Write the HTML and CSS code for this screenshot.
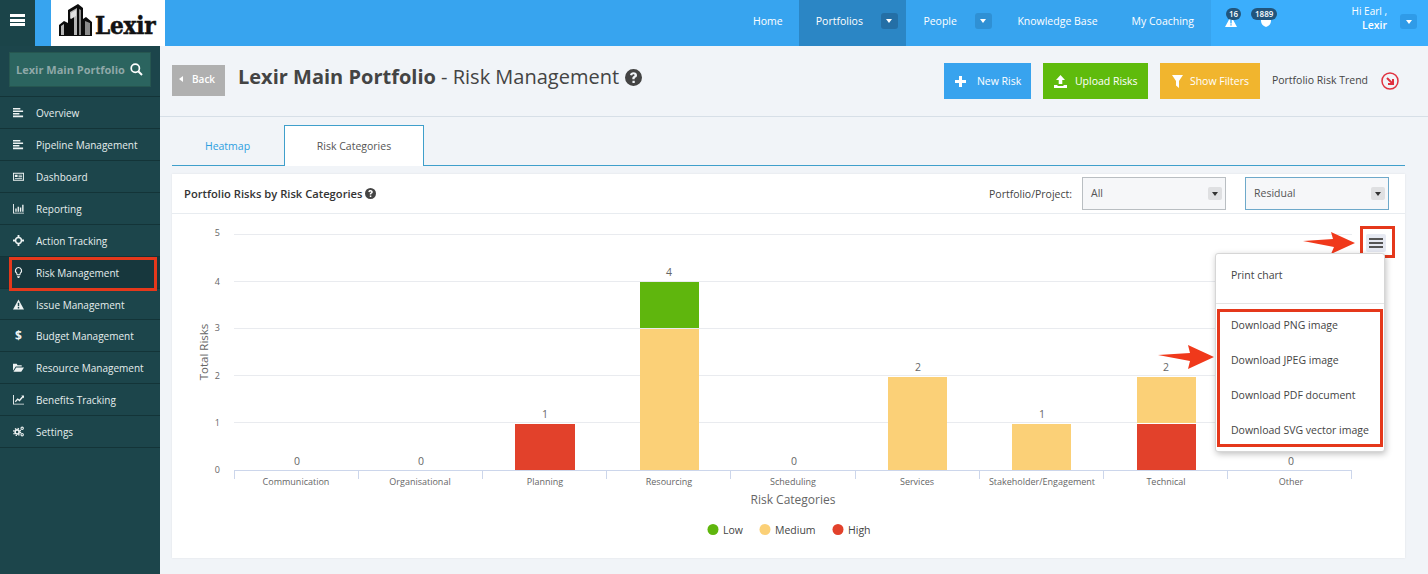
FILE: index.html
```html
<!DOCTYPE html>
<html lang="en">
<head>
<meta charset="utf-8">
<title>Lexir Main Portfolio - Risk Management</title>
<link rel="stylesheet" href="styles.css">
</head>
<body>
<header class="topbar">
  <button class="toggle" aria-label="Menu"><span></span><span></span><span></span></button>
  <div class="gap"></div>
  <div class="logo">
    <svg class="logo-mark" width="33" height="32" viewBox="0 0 33 32">
      <path fill="#0c0c0c" d="M0 32V21l5-4 4 2V6L19 0l5 4v11l3-2 6 5v14z"/>
      <path fill="#b5b5b5" d="M2 22l3-2v11H2zM11 8l7-4v27h-3V12l-4 3z"/>
      <path fill="#e2e2e2" d="M12 9l5-3v6l-5 3z"/>
      <path fill="#8a8a8a" d="M20 5l2 1v25h-2zM26 17l5 2v12h-5z"/>
    </svg>
    <span class="logo-text">Lexir</span>
  </div>
  <nav class="nav">
    <a class="nav-item">Home</a>
    <a class="nav-item active has-caret">Portfolios<span class="caret-btn dark"><i></i></span></a>
    <a class="nav-item has-caret">People<span class="caret-btn"><i></i></span></a>
    <a class="nav-item">Knowledge Base</a>
    <a class="nav-item">My Coaching</a>
  </nav>
  <div class="user-area">
    <span class="alert-icon">
      <svg width="12" height="11" viewBox="0 0 12 11"><path fill="#fff" fill-rule="evenodd" d="M6 0l6 11H0zM5.300 4v3.500h1.400V4zm0 4.300v1.300h1.400V8.300z"/></svg>
      <b class="badge">16</b>
    </span>
    <span class="alert-icon second">
      <svg width="10" height="11" viewBox="0 0 10 11"><path fill="#fff" d="M5 0l5 2v3c0 3-2 5-5 6-3-1-5-3-5-6V2z"/></svg>
      <b class="badge">1889</b>
    </span>
    <div class="user-name"><span>Hi Earl ,</span><strong>Lexir</strong></div>
    <span class="caret-btn user-caret"><i></i></span>
  </div>
</header>

<div class="layout">
  <aside class="sidebar">
    <div class="search-wrap">
      <div class="search">
        <span>Lexir Main Portfolio</span>
        <svg width="13" height="13" viewBox="0 0 13 13"><circle cx="5.300" cy="5.300" r="4.100" fill="none" stroke="#fff" stroke-width="1.700"/><path d="M8.500 8.500L12 12" stroke="#fff" stroke-width="2"/></svg>
      </div>
    </div>
    <ul class="menu">
      <li><svg class="mi" viewBox="0 0 12 12"><path d="M0 1h8v1.700H0zM0 3.800h11v1.700H0zM0 6.600h7v1.700H0zM0 9.400h11v1.700H0z"/></svg>Overview</li>
      <li><svg class="mi" viewBox="0 0 12 12"><path d="M0 1h8v1.700H0zM0 3.800h11v1.700H0zM0 6.600h7v1.700H0zM0 9.400h11v1.700H0z"/></svg>Pipeline Management</li>
      <li><svg class="mi" viewBox="0 0 12 12"><path fill-rule="evenodd" d="M0 2h12v8.500H0zM1 3v6.500h10V3zM2 4h3v2.500H2zM6 4h4v1H6zM6 5.800h4v1H6zM2 7.500h8v1H2z"/></svg>Dashboard</li>
      <li><svg class="mi" viewBox="0 0 12 12"><path d="M0 1h1v9.500h11v1H0zM2.500 6h1.500v3.500H2.500zM5 4h1.500v5.500H5zM7.500 5h1.500v4.500H7.500zM10 2h1.500v7.500H10z"/></svg>Reporting</li>
      <li><svg class="mi" viewBox="0 0 12 12"><circle cx="6" cy="6" r="3.200" fill="none" stroke="#eef3f3" stroke-width="1.600"/><path d="M5 0h2v3H5zM5 9h2v3H5zM0 5h3v2H0zM9 5h3v2H9z"/></svg>Action Tracking</li>
      <li class="current"><svg class="mi" viewBox="0 0 12 12"><path fill-rule="evenodd" d="M6 0a4 4 0 0 1 2.400 7.200L8 9H4l-.4-1.800A4 4 0 0 1 6 0zm0 1.200a2.800 2.800 0 0 0-1.500 5.100l.4 1.500h2.200l.4-1.500A2.800 2.800 0 0 0 6 1.200zM4.500 10h3v1l-1 1h-1l-1-1z"/></svg>Risk Management</li>
      <li><svg class="mi" viewBox="0 0 12 12"><path fill-rule="evenodd" d="M6 .5l6 11H0zM5.200 4v4h1.600V4zm0 4.800v1.500h1.600V8.800z"/></svg>Issue Management</li>
      <li><span class="mi dollar">$</span>Budget Management</li>
      <li><svg class="mi" viewBox="0 0 12 12"><path d="M0 2h4l1 1.500h4.500V5H3L0 9.500zM3.500 6H12L9 10.500H.5z"/></svg>Resource Management</li>
      <li><svg class="mi" viewBox="0 0 12 12"><path d="M0 1h1v9.500h11v1H0zM2 8l3-3.500 2 1.500 3-3.500-1-.8h3v3l-1-.9-3.800 4.300-2-1.500L3 9z"/></svg>Benefits Tracking</li>
      <li><svg class="mi" viewBox="0 0 12 12"><g fill="none" stroke="#eef3f3"><circle cx="4.500" cy="6.500" r="2.200" stroke-width="1.800"/><circle cx="4.500" cy="6.500" r="3.800" stroke-width="1.400" stroke-dasharray="1.500 1.500"/><circle cx="10" cy="2.500" r="1.300" stroke-width="1.200"/><circle cx="10" cy="9.500" r="1.300" stroke-width="1.200"/></g></svg>Settings</li>
    </ul>
  </aside>

  <main class="main">
    <section class="page-head">
      <a class="back"><i></i>Back</a>
      <h1><b>Lexir Main Portfolio</b> - Risk Management
        <svg class="help big" viewBox="0 0 16 16"><use href="#help"/></svg>
      </h1>
      <div class="actions">
        <a class="btn blue"><svg width="11" height="11" viewBox="0 0 11 11"><path fill="#fff" d="M4 0h3v4h4v3H7v4H4V7H0V4h4z"/></svg>New Risk</a>
        <a class="btn green"><svg width="13" height="13" viewBox="0 0 13 13"><path fill="#fff" d="M6.500 0L11 5H8.300v4H4.700V5H2zM0 10h3.500v1h6v-1H13v3H0z"/></svg>Upload Risks</a>
        <a class="btn orange"><svg width="11" height="13" viewBox="0 0 11 13"><path fill="#fff" d="M0 0h11L7 6v7L4 10.500V6z"/></svg>Show Filters</a>
        <span class="trend-label">Portfolio Risk Trend</span>
        <svg class="trend" width="18" height="18" viewBox="0 0 18 18"><circle cx="9" cy="9" r="8" fill="none" stroke="#e0313f" stroke-width="1.500"/><path d="M6 6l5.500 5.500M12 7v5H7" fill="none" stroke="#e0313f" stroke-width="2"/></svg>
      </div>
    </section>

    <section class="content">
      <div class="tabs">
        <a class="tab">Heatmap</a>
        <a class="tab selected">Risk Categories</a>
      </div>

      <div class="panel">
        <div class="panel-head">
          <h2>Portfolio Risks by Risk Categories
            <svg class="help small" viewBox="0 0 16 16"><use href="#help"/></svg>
          </h2>
          <label class="filter-label">Portfolio/Project:</label>
          <div class="select"><span class="select-text">All</span><span class="select-caret"><i></i></span></div>
          <div class="select focus"><span class="select-text">Residual</span><span class="select-caret"><i></i></span></div>
        </div>

        <div class="chart">
          <svg class="chart-svg" width="1233" height="344" viewBox="172 214 1233 344">
            <g class="grid">
              <path d="M234 234.500H1352M234 281.500H1352M234 328.500H1352M234 375.500H1352M234 422.500H1352"/>
            </g>
            <g class="axis">
              <path d="M234 470.500H1352M234.500 470v9M358.500 470v9M482.500 470v9M606.500 470v9M730.500 470v9M855.500 470v9M979.500 470v9M1103.500 470v9M1227.500 470v9M1351.500 470v9"/>
            </g>
            <g class="ylab">
              <text x="220" y="236">5</text><text x="220" y="285">4</text><text x="220" y="331">3</text>
              <text x="220" y="379">2</text><text x="220" y="426">1</text><text x="220" y="473">0</text>
            </g>
            <text class="ytitle" transform="translate(208 352) rotate(-90)">Total Risks</text>
            <rect x="515" y="424" width="60" height="46" fill="#e2412b"/>
            <rect x="640" y="282" width="59" height="46" fill="#5fb60d"/>
            <rect x="640" y="329" width="59" height="141" fill="#fbd077"/>
            <rect x="888" y="377" width="59" height="93" fill="#fbd077"/>
            <rect x="1012" y="424" width="59" height="46" fill="#fbd077"/>
            <rect x="1137" y="377" width="59" height="46" fill="#fbd077"/>
            <rect x="1137" y="424" width="59" height="46" fill="#e2412b"/>
            <g class="val">
              <text x="297" y="465">0</text><text x="421" y="465">0</text><text x="545" y="418">1</text>
              <text x="669" y="276">4</text><text x="794" y="465">0</text><text x="918" y="371">2</text>
              <text x="1042" y="418">1</text><text x="1166" y="371">2</text><text x="1291" y="465">0</text>
            </g>
            <g class="cat">
              <text x="296" y="485">Communication</text><text x="420" y="485">Organisational</text>
              <text x="545" y="485">Planning</text><text x="669" y="485">Resourcing</text>
              <text x="793" y="485">Scheduling</text><text x="917" y="485">Services</text>
              <text x="1042" y="485">Stakeholder/Engagement</text><text x="1166" y="485">Technical</text>
              <text x="1291" y="485">Other</text>
            </g>
            <text class="xtitle" x="793" y="504">Risk Categories</text>
            <g class="legend">
              <circle cx="713" cy="529.500" r="5.500" fill="#5fb60d"/><text x="723" y="534">Low</text>
              <circle cx="765" cy="529.500" r="5.500" fill="#fbd077"/><text x="775" y="534">Medium</text>
              <circle cx="838" cy="529.500" r="5.500" fill="#e2412b"/><text x="848" y="534">High</text>
            </g>
          </svg>

          <div class="export-btn"><span></span><span></span><span></span></div>
          <div class="export-mark"></div>
          <svg class="arrow arrow-top" width="52" height="22" viewBox="0 0 52 22"><path fill="#f0391b" d="M0 9l30-2-2-7 24 11-24 11 3-7z"/></svg>

          <div class="export-menu">
            <div class="em-item first">Print chart</div>
            <hr>
            <div class="em-item">Download PNG image</div>
            <div class="em-item">Download JPEG image</div>
            <div class="em-item">Download PDF document</div>
            <div class="em-item">Download SVG vector image</div>
            <div class="downloads-mark"></div>
          </div>
          <svg class="arrow arrow-mid" width="56" height="24" viewBox="0 0 56 24"><path fill="#f0391b" d="M0 10l32-2-2-8 26 12-26 12 2-8z"/></svg>
        </div>
      </div>
    </section>
  </main>
</div>

<svg class="defs" width="0" height="0" aria-hidden="true">
  <symbol id="help" viewBox="0 0 16 16"><path fill="currentColor" fill-rule="evenodd" d="M8 0a8 8 0 1 1 0 16A8 8 0 0 1 8 0zM7 11v2.200h2.200V11zM8 3C6.200 3 5 4 4.700 5.600l2 .5C6.900 5.300 7.300 5 8 5c.6 0 1 .3 1 .8 0 .4-.3.7-1 1.100-.8.500-1.100 1.100-1.100 2v.7h2.200v-.5c0-.4.200-.6.800-1 .9-.6 1.400-1.300 1.400-2.300C11.300 4.100 10 3 8 3z"/></symbol>
</svg>
</body>
</html>
```
FILE: styles.css
```css
* { box-sizing: border-box; }
html, body { margin: 0; padding: 0; }
body {
  width: 1428px;
  height: 574px;
  overflow: hidden;
  background: #f1f4f8;
  font-family: "Open Sans", "Liberation Sans", sans-serif;
  font-size: 11px;
  color: #444;
}
.defs { position: absolute; }

/* Top bar */
.topbar { display: flex; height: 46px; background: #37a4ef; }
.toggle {
  width: 35px; height: 46px; border: 0; padding: 0 0 6px;
  background: #1b4449;
  display: flex; flex-direction: column; align-items: center; justify-content: center; gap: 1.500px;
}
.toggle span { display: block; width: 15px; height: 3px; background: #fff; }
.gap { width: 16px; }
.logo {
  width: 114px; background: #fff;
  display: flex; align-items: flex-end; padding: 0 0 10px 8px; gap: 3px;
}
.logo-text {
  font-family: "DejaVu Serif", serif;
  font-stretch: condensed;
  font-weight: 700; font-size: 24px; line-height: 20px; color: #111;
  letter-spacing: -.2px; -webkit-text-stroke: .5px #111;
}
.nav { display: flex; margin-left: auto; height: 46px; }
.nav-item {
  display: flex; align-items: center;
  padding: 0 17px 4px; color: #fff; font-size: 10.500px;
}
.nav-item:first-child { padding: 0 16px 4px; }
.nav-item.has-caret { padding-right: 8.500px; }
.nav-item.active { background: #2b86c5; }
.caret-btn {
  display: inline-flex; align-items: center; justify-content: center;
  width: 17px; height: 16px; border-radius: 3px; margin-left: 18px;
  background: #2f90d4;
}
.caret-btn.dark { background: #246fa6; }
.caret-btn i {
  width: 0; height: 0;
  border-left: 3px solid transparent; border-right: 3px solid transparent;
  border-top: 4px solid #fff;
}
.user-area {
  width: 217px; background: #3baefc; color: #fff;
  display: flex; padding-left: 14px;
}
.alert-icon { position: relative; width: 36px; padding-top: 16px; display: block; }
.alert-icon.second { width: 26px; }
.alert-icon svg { display: block; }
.badge {
  position: absolute; top: 8px; left: 1px;
  height: 12px; min-width: 14px; padding: 0 3px;
  border-radius: 6px; background: #21557c; color: #fff;
  font-size: 8px; line-height: 12px; font-weight: 600; text-align: center;
}
.second .badge { left: -10px; padding: 0 4px; }
.user-name {
  width: 100px; padding-top: 4px;
  display: flex; flex-direction: column; align-items: flex-end;
  font-size: 10px; line-height: 14px;
}
.user-name strong { font-weight: 600; font-size: 10.500px; }
.user-caret { height: 15px; width: 17px; margin: 14px 0 0 13px; background: #2f9be8; }

/* Layout */
.layout { display: flex; height: 528px; }
.sidebar { width: 160px; background: #1c454b; color: #e6eeee; flex: none; }
.search-wrap { height: 51px; padding: 6px 9px 0; border-bottom: 1px solid #133438; }
.search {
  width: 142px; height: 35px; background: #2b645f;
  border: 1px solid #265650;
  display: flex; align-items: center; justify-content: space-between;
  padding: 0 7px 0 6px; color: #8fa8a8;
  font-weight: 700; font-size: 11px; white-space: nowrap;
}
.menu { list-style: none; margin: 0; padding: 0; }
.menu li {
  height: 32px; display: flex; align-items: center;
  padding-left: 13px; border-bottom: 1px solid #133438;
  font-size: 10px; position: relative; white-space: nowrap;
}
.menu li:nth-child(7) { height: 31px; padding-top: 1px; }
.mi { width: 11px; height: 11px; margin-right: 12px; fill: #eef3f3; flex: none; }
.dollar { font-size: 12px; font-weight: 700; line-height: 11px; text-align: center; color: #eef3f3; }
.menu li.current { background: #17373d; }
.menu li.current::after {
  content: ""; box-sizing: border-box;
  position: absolute; left: 9px; top: 0; width: 148px; height: 34px;
  border: 3px solid #e5381b;
}

/* Main */
.main { width: 1268px; }
.page-head {
  height: 71px; border-bottom: 1px solid #d7dfe7;
  display: flex; padding: 17px 0 0 12px;
}
.back {
  width: 53px; height: 31px; margin-top: 2px; padding: 0 0 4px 7px;
  background: #b0b0b0; color: #fff;
  display: flex; align-items: center; font-size: 10px; font-weight: 600;
}
.back i {
  width: 0; height: 0; margin-right: 9px;
  border-top: 3px solid transparent; border-bottom: 3px solid transparent;
  border-right: 4px solid #fff;
}
h1 {
  margin: 0 0 0 13px; font-size: 20px; line-height: 27px; font-weight: 400; color: #444;
  white-space: nowrap;
}
h1 b { font-weight: 700; }
.help { display: inline-block; color: #444; }
.help.big { width: 17px; height: 17px; vertical-align: -2px; margin-left: 1px; }
.help.small { width: 11px; height: 11px; vertical-align: -1px; }
.actions { margin-left: auto; display: flex; align-items: flex-start; padding-right: 29px; }
.btn {
  display: flex; align-items: center; height: 36px; color: #fff; font-size: 10.500px;
  margin-right: 12px; white-space: nowrap;
}
.btn.blue { width: 87px; background: #38a3ee; padding-left: 11px; }
.btn.blue svg { margin-right: 11px; }
.btn.green { width: 105px; background: #5fbb0c; padding-left: 11px; }
.btn.green svg { margin-right: 8px; }
.btn.orange { width: 100px; background: #f1b52e; padding-left: 12px; }
.btn.orange svg { margin-right: 7px; }
.trend-label { font-size: 10.500px; line-height: 34px; margin-right: 13px; white-space: nowrap; }
.trend { margin-top: 9px; }

.content { padding: 8px 23px 0 12px; }
.tabs { height: 41px; display: flex; border-bottom: 1px solid #3f9fcb; }
.tab {
  height: 41px; display: flex; align-items: center; justify-content: center;
  width: 111px; margin-right: 1px; color: #2d9fe0; font-size: 10.500px;
}
.tab.selected {
  width: 140px; margin-right: 0; background: #fff; color: #555;
  border: 1px solid #3f9fcb; border-bottom: 0;
}
.panel {
  margin-top: 8px; width: 1233px; height: 384px; background: #fff;
  box-shadow: 0 0 2px rgba(0,0,0,.08);
}
.panel-head {
  height: 40px; border-bottom: 1px solid #e8ecf0;
  display: flex; align-items: center; padding: 0 16px 0 12px;
}
h2 { margin: 0 auto 0 0; font-size: 11.200px; font-weight: 600; color: #333; }
.filter-label { font-size: 10.500px; margin-right: 10px; color: #444; }
.select {
  width: 144px; height: 33px; border: 1px solid #b9bec2; background: #f6f7f9;
  display: flex; align-items: center; justify-content: space-between;
  padding: 0 3px 0 8px; font-size: 10.500px; color: #555;
}
.select-text { margin-bottom: 2px; }
.select.focus { margin-left: 19px; border-color: #6ea9ca; }
.select-caret {
  width: 14px; height: 13px; background: #dfe0e2; border-radius: 2px;
  display: flex; align-items: center; justify-content: center;
}
.select-caret i {
  width: 0; height: 0;
  border-left: 3px solid transparent; border-right: 3px solid transparent; border-top: 4px solid #333;
}

/* Chart */
.chart { position: relative; height: 344px; }
.chart-svg { display: block; font-family: "Open Sans", "Liberation Sans", sans-serif; }
.grid path { stroke: #e9ebef; fill: none; }
.axis path { stroke: #ccd6eb; fill: none; }
.ylab text { font-size: 9px; fill: #666; text-anchor: end; }
.ytitle { font-size: 11.500px; fill: #666; text-anchor: middle; }
.val text { font-size: 10.500px; fill: #666; text-anchor: middle; }
.cat text { font-size: 9px; fill: #666; text-anchor: middle; }
.xtitle { font-size: 12px; fill: #666; text-anchor: middle; }
.legend text { font-size: 10.500px; fill: #444; }

.export-btn {
  position: absolute; left: 1194px; top: 20px; width: 20px; height: 18px;
  background: #e6e9f2; border-radius: 2px;
  display: flex; flex-direction: column; align-items: center; justify-content: center; gap: 1.500px;
}
.export-btn span { display: block; width: 14px; height: 2.500px; background: #555; }
.export-mark {
  position: absolute; left: 1188px; top: 12px; width: 35px; height: 32px;
  border: 3px solid #e5381b;
}
.arrow { position: absolute; }
.arrow-top { left: 1131px; top: 18px; }
.arrow-mid { left: 986px; top: 131px; }
.export-menu {
  position: absolute; left: 1043px; top: 39px; width: 170px; height: 199px;
  background: #fff; border: 1px solid #d6d6d6; border-radius: 3px;
  box-shadow: 1px 2px 6px rgba(0,0,0,.25);
  font-size: 10.500px; color: #444;
}
.export-menu hr { margin: 0 0 4px; border: 0; border-top: 1px solid #e4e4e4; }
.em-item { height: 35px; line-height: 35px; padding-left: 15px; white-space: nowrap; }
.em-item.first { height: 49px; line-height: 42px; }
.downloads-mark {
  position: absolute; left: 1px; top: 55px; width: 166px; height: 138px;
  border: 3px solid #e5381b; pointer-events: none;
}
```
